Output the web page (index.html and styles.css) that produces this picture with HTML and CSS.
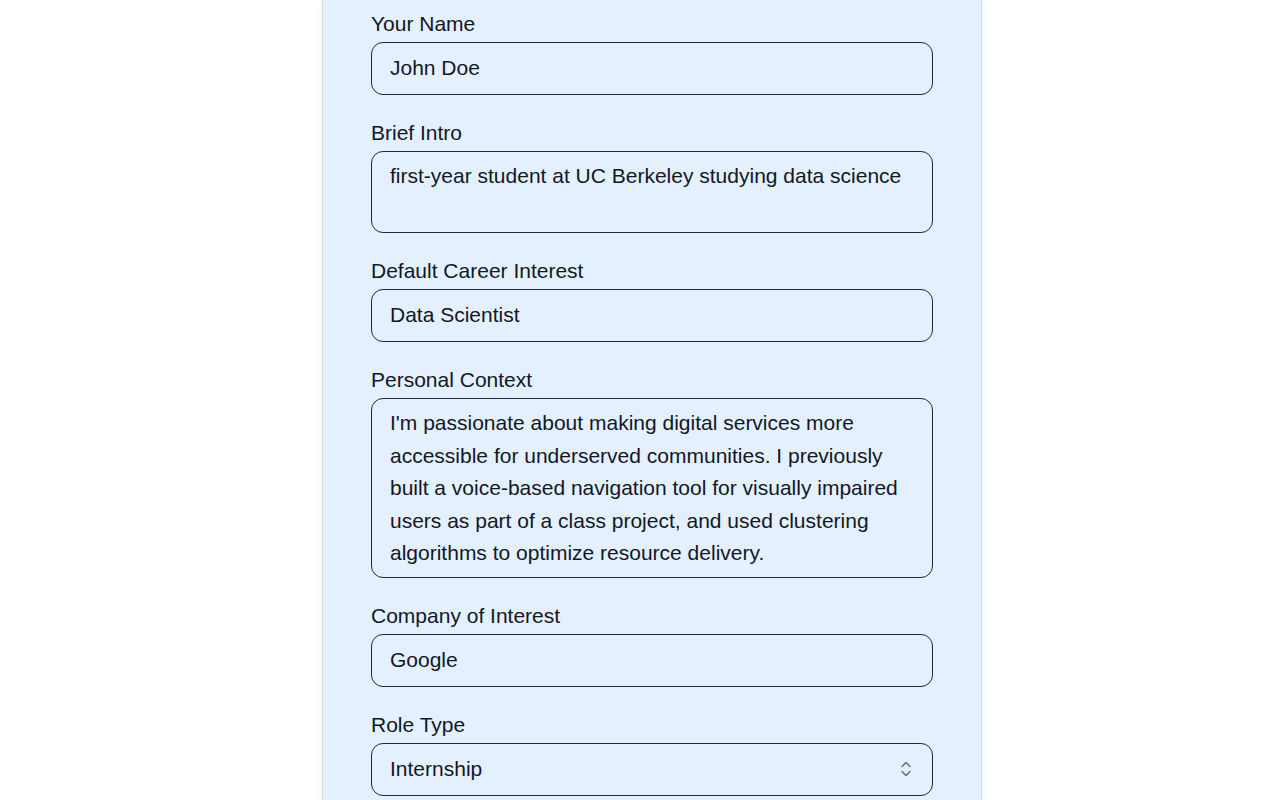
FILE: index.html
```html
<!DOCTYPE html>
<html lang="en">
<head>
<meta charset="utf-8">
<title>Profile</title>
<link rel="stylesheet" href="styles.css">
</head>
<body>
<main class="page">
  <form class="card">
    <div class="field">
      <label class="label" for="name">Your Name</label>
      <input class="control" id="name" type="text" value="John Doe">
    </div>
    <div class="field">
      <label class="label" for="intro">Brief Intro</label>
      <textarea class="control area" id="intro" rows="2">first-year student at UC Berkeley studying data science</textarea>
    </div>
    <div class="field">
      <label class="label" for="career">Default Career Interest</label>
      <input class="control" id="career" type="text" value="Data Scientist">
    </div>
    <div class="field">
      <label class="label" for="context">Personal Context</label>
      <textarea class="control area" id="context" rows="5">I'm passionate about making digital services more accessible for underserved communities. I previously built a voice-based navigation tool for visually impaired users as part of a class project, and used clustering algorithms to optimize resource delivery.</textarea>
    </div>
    <div class="field">
      <label class="label" for="company">Company of Interest</label>
      <input class="control" id="company" type="text" value="Google">
    </div>
    <div class="field">
      <label class="label" for="role">Role Type</label>
      <div class="select-wrap">
        <select class="control select" id="role">
          <option>Internship</option>
          <option>Full-time</option>
        </select>
        <svg class="chev" width="14" height="20" viewBox="0 0 14 20" aria-hidden="true">
          <path d="M3 7.5 L7 3.5 L11 7.5" fill="none" stroke="#6b7280" stroke-width="1.6" stroke-linecap="round" stroke-linejoin="round"/>
          <path d="M3 12.5 L7 16.5 L11 12.5" fill="none" stroke="#6b7280" stroke-width="1.6" stroke-linecap="round" stroke-linejoin="round"/>
        </svg>
      </div>
    </div>
  </form>
</main>
</body>
</html>
```

FILE: styles.css
```css
* { box-sizing: border-box; }

html, body {
  margin: 0;
  padding: 0;
  background: #ffffff;
  font-family: "Liberation Sans", Arial, sans-serif;
  color: #111827;
}

.page {
  display: flex;
  justify-content: center;
  padding-left: 24px;
  min-height: 100vh;
}

.card {
  width: 660px;
  background: #e4f0fd;
  border: 1px solid #c6dcf5;
  border-top: none;
  box-shadow: 0 1px 6px rgba(0, 0, 0, 0.06);
  padding: 10px 48px 40px;
  display: flex;
  flex-direction: column;
  gap: 24px;
}

.field {
  display: flex;
  flex-direction: column;
  gap: 4px;
}

.label {
  font-size: 21px;
  line-height: 28px;
  color: #111827;
}

.control {
  display: block;
  width: 100%;
  font-family: inherit;
  font-size: 21px;
  color: #111827;
  background: transparent;
  border: 1px solid #1f2937;
  border-radius: 12px;
  height: 53px;
  padding: 0 18px 1px;
  line-height: 28px;
  outline: none;
}

.area {
  height: auto;
  padding: 8px 18px 7px;
  line-height: 32.5px;
  resize: none;
  overflow: hidden;
}

.select-wrap {
  position: relative;
}

.select {
  appearance: none;
  -webkit-appearance: none;
}

.chev {
  position: absolute;
  right: 20px;
  top: 16px;
  pointer-events: none;
}
```
